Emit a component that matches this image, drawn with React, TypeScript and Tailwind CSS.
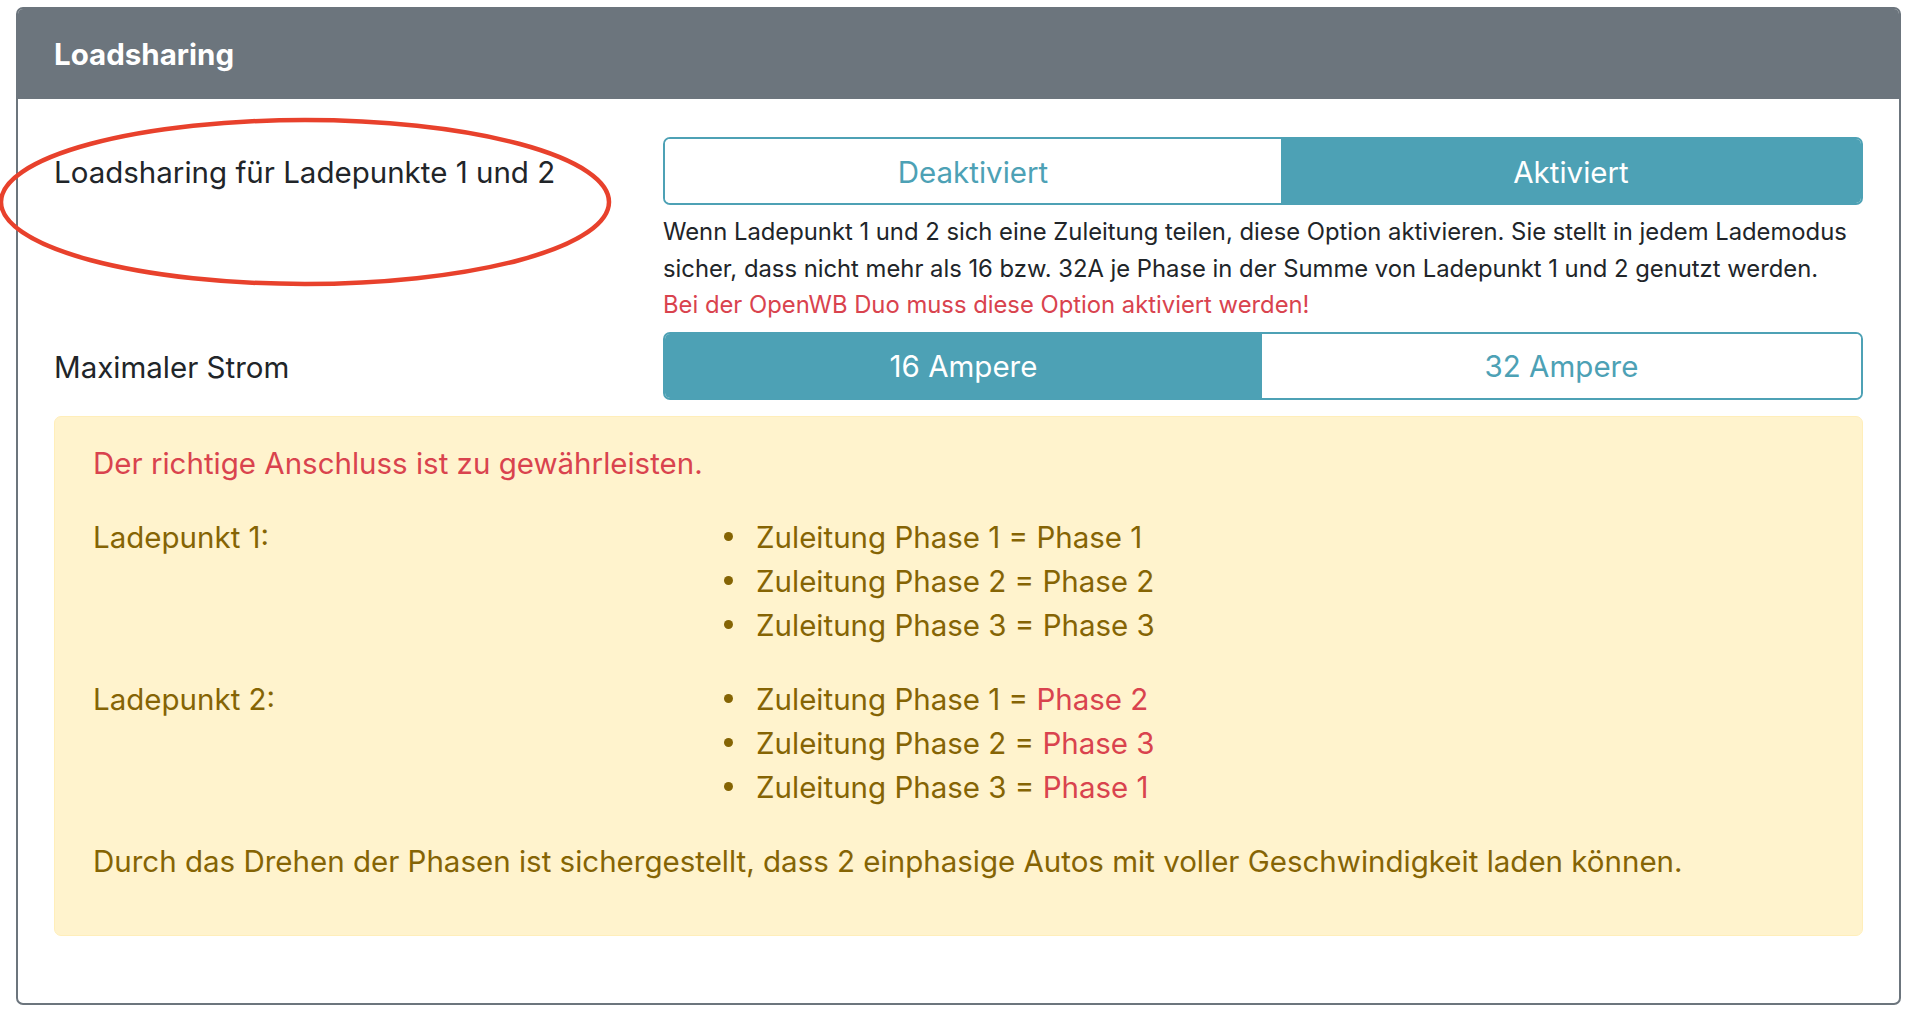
import React from 'react';

const font = { fontFamily: 'Inter, "Noto Sans", "Liberation Sans", sans-serif' };

function Toggle({ left, right, active, leftWidth }: { left: string; right: string; active: 'left' | 'right'; leftWidth: string }) {
  const on = 'bg-[#4da1b5] text-white';
  const off = 'bg-white text-[#4da1b5]';
  return (
    <div className={`grid ${leftWidth} h-[68px] rounded-[7px] border-2 border-[#4da1b5] overflow-hidden text-[29.5px]`}>
      <button className={`flex items-center justify-center pt-[2px] ${active === 'left' ? on : off}`}>{left}</button>
      <button className={`flex items-center justify-center pt-[2px] ${active === 'right' ? on : off}`}>{right}</button>
    </div>
  );
}

function PhaseList({ items }: { items: { from: number; to: number; swapped?: boolean }[] }) {
  return (
    <ul>
      {items.map((it) => (
        <li key={it.from} className="flex items-center gap-[23px] leading-[44px]">
          <span className="w-[9px] h-[9px] rounded-full bg-[#856404]" />
          <span>
            Zuleitung Phase {it.from} ={' '}
            <span className={it.swapped ? 'text-[#d9434e]' : ''}>Phase {it.to}</span>
          </span>
        </li>
      ))}
    </ul>
  );
}

export default function App() {
  return (
    <div className="relative min-h-[1024px] bg-white pt-[7px] pl-[16px] pr-[27px]" style={font}>
      <div className="rounded-[7px] border-2 border-[#6c757d] overflow-hidden h-[998px] bg-white">
        {/* Header */}
        <div className="h-[90px] bg-[#6c757d] flex items-center px-[36px]">
          <h2 className="text-white font-bold text-[29.5px]">Loadsharing</h2>
        </div>

        <div className="px-[36px] pt-[38px]">
          {/* Loadsharing toggle */}
          <div className="grid grid-cols-[609px_1fr]">
            <div className="h-[68px] flex items-center pt-[3px] text-[29.5px] text-[#212529]">
              Loadsharing für Ladepunkte 1 und 2
            </div>
            <div>
              <Toggle left="Deaktiviert" right="Aktiviert" active="right" leftWidth="grid-cols-[616px_1fr]" />
              <p className="mt-[9px] text-[23.8px] leading-[36.5px] text-[#212529] whitespace-nowrap">
                Wenn Ladepunkt 1 und 2 sich eine Zuleitung teilen, diese Option aktivieren. Sie stellt in jedem Lademodus
                <br />
                sicher, dass nicht mehr als 16 bzw. 32A je Phase in der Summe von Ladepunkt 1 und 2 genutzt werden.
                <br />
                <span className="text-[#d9434e]">Bei der OpenWB Duo muss diese Option aktiviert werden!</span>
              </p>
            </div>
          </div>

          {/* Max current */}
          <div className="grid grid-cols-[609px_1fr] mt-[8px]">
            <div className="h-[68px] flex items-center pt-[3px] text-[29.5px] text-[#212529]">Maximaler Strom</div>
            <Toggle left="16 Ampere" right="32 Ampere" active="left" leftWidth="grid-cols-[597px_1fr]" />
          </div>

          {/* Wiring notice */}
          <div className="mt-[16px] rounded-[7px] border border-[#ffeeba] bg-[#fff3cd] text-[#856404] text-[29.5px] pl-[38px] pr-[38px] pt-[24px] pb-[52px]">
            <p className="leading-[44px] text-[#d9434e]">Der richtige Anschluss ist zu gewährleisten.</p>

            <div className="grid grid-cols-[631px_1fr] mt-[30px]">
              <div className="leading-[44px]">Ladepunkt 1:</div>
              <PhaseList items={[{ from: 1, to: 1 }, { from: 2, to: 2 }, { from: 3, to: 3 }]} />
            </div>

            <div className="grid grid-cols-[631px_1fr] mt-[30px]">
              <div className="leading-[44px]">Ladepunkt 2:</div>
              <PhaseList
                items={[
                  { from: 1, to: 2, swapped: true },
                  { from: 2, to: 3, swapped: true },
                  { from: 3, to: 1, swapped: true },
                ]}
              />
            </div>

            <p className="mt-[30px] leading-[44px]">
              Durch das Drehen der Phasen ist sichergestellt, dass 2 einphasige Autos mit voller Geschwindigkeit laden können.
            </p>
          </div>
        </div>
      </div>

      {/* annotation ring */}
      <svg className="absolute left-0 top-0 pointer-events-none" width="640" height="300" viewBox="0 0 640 300">
        <ellipse cx="305" cy="202" rx="304" ry="82" fill="none" stroke="#e8412c" strokeWidth="4.5" />
      </svg>
    </div>
  );
}
